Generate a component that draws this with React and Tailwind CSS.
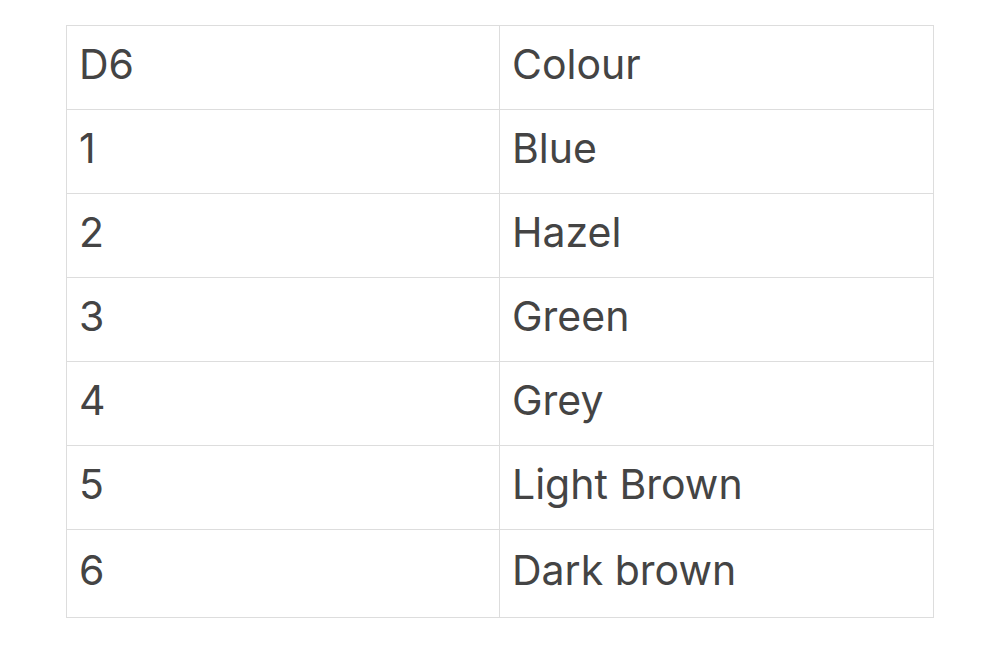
export default function App() {
  const rows = [
    ["D6", "Colour"],
    ["1", "Blue"],
    ["2", "Hazel"],
    ["3", "Green"],
    ["4", "Grey"],
    ["5", "Light Brown"],
    ["6", "Dark brown"],
  ];
  return (
    <div className="w-[1000px] h-[662px] bg-white pt-[25px] pl-[66px]" style={{ fontFamily: "Inter, 'Noto Sans', sans-serif" }}>
      <table className="w-[868px] border-collapse text-[41px] text-[#444444]">
        <tbody>
          {rows.map((r, i) => (
            <tr key={i} className={i === rows.length - 1 ? "h-[88px]" : "h-[84px]"}>
              <td className="w-[433px] border border-[#dddddd] pl-[12px] pb-[6px] align-middle leading-none">{r[0]}</td>
              <td className="border border-[#dddddd] pl-[12px] pb-[6px] align-middle leading-none">{r[1]}</td>
            </tr>
          ))}
        </tbody>
      </table>
    </div>
  );
}
